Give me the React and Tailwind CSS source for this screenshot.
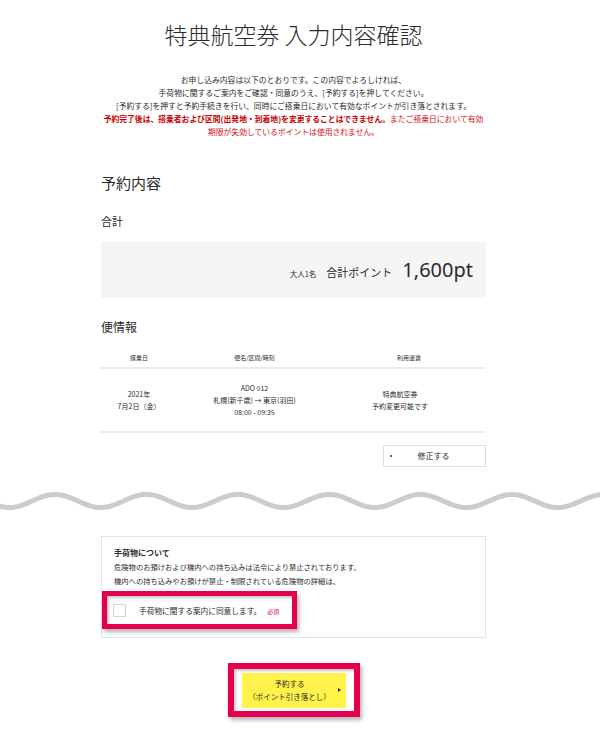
export default function App() {
  // 波線（区切り）
  const wave = [];
  for (let x = -4; x <= 604; x += 2) {
    const y = 12 - 6.5 * Math.cos((2 * Math.PI * (x - 55)) / 91.4);
    wave.push(`${x},${y.toFixed(2)}`);
  }

  return (
    <div className="min-h-[740px] bg-white text-[#2b2b2b] font-['Noto_Sans_CJK_JP',sans-serif]">
      <div className="ml-[101px] w-[385px] pt-[22px]">
        <h1 className="text-center text-[23px] leading-[24px] font-light">特典航空券 入力内容確認</h1>

        {/* 案内文 */}
        <div className="mt-[27px] text-center text-[7.8px] leading-[13px] whitespace-nowrap">
          <p>
            お申し込み内容は以下のとおりです。この内容でよろしければ、
            <br />
            手荷物に関するご案内をご確認・同意のうえ、[予約する]を押してください。
          </p>
          <p>[予約する]を押すと予約手続きを行い、同時にご搭乗日において有効なポイントが引き落とされます。</p>
          <p className="text-[#d70c18]">
            <span className="font-bold text-[#c80000]">予約完了後は、搭乗者および区間(出発地・到着地)を変更することはできません。</span>
            またご搭乗日において有効
            <br />
            期限が失効しているポイントは使用されません。
          </p>
        </div>

        {/* 予約内容 */}
        <h2 className="mt-[35px] text-[15px] leading-[20px]">予約内容</h2>
        <h3 className="mt-[20px] text-[11px] leading-[16px]">合計</h3>
        <div className="mt-[13px] h-[56px] bg-[#f5f5f5] flex items-center justify-end pr-[13px]">
          <div className="flex items-baseline pt-[1px]">
            <span className="text-[7.5px]">大人1名</span>
            <span className="ml-[10px] text-[11px]">合計ポイント</span>
            <span className="ml-[10px] text-[20px] leading-none font-['Noto_Sans',sans-serif]">1,600pt</span>
          </div>
        </div>

        {/* 便情報 */}
        <h3 className="mt-[21px] text-[12px] leading-[16px]">便情報</h3>
        <div className="grid grid-cols-[76px_155px_154px] text-center">
          <div className="pt-[18px] pb-[4px] text-[6px] leading-[10px] border-b-2 border-[#ebebeb]">搭乗日</div>
          <div className="pt-[18px] pb-[4px] text-[6px] leading-[10px] border-b-2 border-[#ebebeb]">便名/区間/時刻</div>
          <div className="pt-[18px] pb-[4px] text-[6px] leading-[10px] border-b-2 border-[#ebebeb]">利用運賃</div>

          <div className="h-[64px] flex flex-col justify-center text-[7px] leading-[12px] border-b-2 border-[#ebebeb]">
            <span>2021年</span>
            <span>7月2日（金）</span>
          </div>
          <div className="h-[64px] flex flex-col justify-center text-[7px] leading-[12px] border-b-2 border-[#ebebeb]">
            <span>ADO 012</span>
            <span>札幌(新千歳) → 東京(羽田)</span>
            <span>08:00 - 09:35</span>
          </div>
          <div className="h-[64px] flex flex-col justify-center pr-[18px] text-[7px] leading-[12px] border-b-2 border-[#ebebeb]">
            <span>特典航空券</span>
            <span>予約変更可能です</span>
          </div>
        </div>

        <div className="mt-[12px] flex justify-end">
          <button className="w-[103px] h-[22px] border border-[#dcdcdc] bg-white flex items-center">
            <span className="ml-[6px] w-[2px] h-[2px] rounded-full bg-[#333]" />
            <span className="flex-1 text-center pr-[10px] text-[8px]">修正する</span>
          </button>
        </div>
      </div>

      <svg className="mt-[22px] block" width="600" height="24" viewBox="0 0 600 24">
        <polyline points={wave.join(" ")} fill="none" stroke="#cccccc" strokeWidth="5" />
      </svg>

      <div className="ml-[101px] w-[385px]">
        {/* 手荷物について */}
        <div className="mt-[23px] border border-[#e2e2e2] pt-[9px] pb-[8px] px-[12px]">
          <p className="text-[8px] font-bold leading-[14px]">手荷物について</p>
          <p className="text-[7.3px] leading-[14px] whitespace-nowrap">
            危険物のお預けおよび機内への持ち込みは法令により禁止されております。
            <br />
            機内への持ち込みやお預けが禁止・制限されている危険物の詳細は、
            <br />
            お預けのご手荷物についてをご確認ください。
          </p>
          <div className="relative z-10 -mt-[11px] -ml-[12px] w-[195px] h-[38px] border-[5px] border-[#e4004f] bg-white shadow-[2px_3px_4px_rgba(0,0,0,0.3),inset_2px_2px_3px_rgba(0,0,0,0.22)] flex items-center">
            <span className="ml-[6px] w-[13px] h-[13px] border border-[#d5d5d5] bg-white" />
            <span className="ml-[13px] text-[7.7px] pt-[2px]">手荷物に関する案内に同意します。</span>
            <span className="ml-[6px] text-[6px] text-[#e4004f] pt-[2px]">必須</span>
          </div>
        </div>

        {/* 予約ボタン */}
        <div className="mt-[25px] flex justify-center">
          <div className="w-[132px] h-[54px] border-[6px] border-[#e4004f] bg-white shadow-[2px_3px_4px_rgba(0,0,0,0.3),inset_2px_2px_3px_rgba(0,0,0,0.22)] flex items-center justify-center">
            <button className="w-[104px] h-[35px] bg-[#fff24a] flex items-center">
              <span className="flex-1 text-center text-[7.5px] leading-[13px]">
                予約する
                <br />
                （ポイント引き落とし）
              </span>
              <span className="mr-[5px] w-0 h-0 border-y-[2.5px] border-y-transparent border-l-[3px] border-l-[#333]" />
            </button>
          </div>
        </div>
      </div>
    </div>
  );
}
